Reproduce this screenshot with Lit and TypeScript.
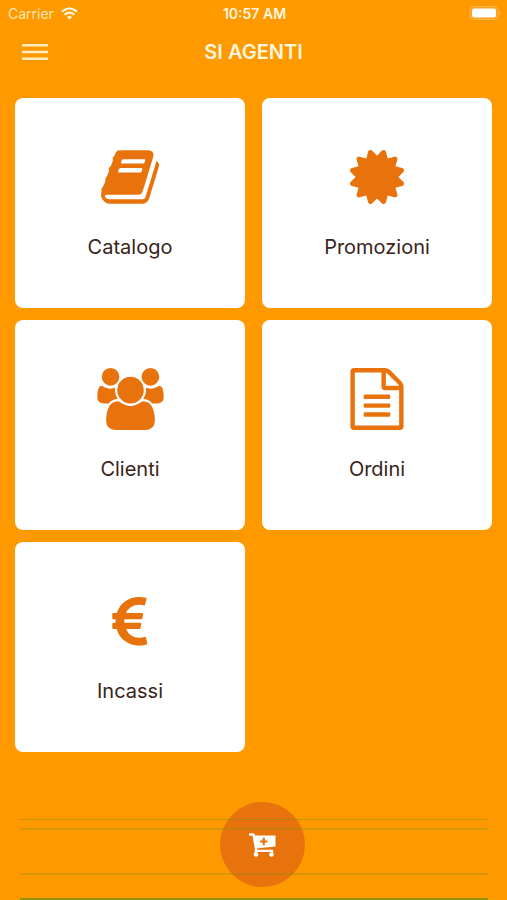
import { LitElement, html, css, svg } from "lit";
import { customElement } from "lit/decorators.js";

const book = svg`<svg viewBox="64 128 1664 1536" width="58" height="54" aria-hidden="true"><path d="M1703 478q40 57 18 129l-275 906q-19 64-76.5 107.5t-122.5 43.5h-923q-77 0-148.5-53.5t-99.5-131.5q-24-67-2-127 0-4 3-27t4-37q1-8-3-21.5t-3-19.5q2-11 8-21t16.5-23.5 16.5-23.5q23-38 45-91.5t30-91.5q3-10 .5-30t-.5-28q3-11 17-28t17-23q21-36 42-92t25-90q1-9-2.5-32t.5-28q4-13 22-30.5t22-22.5q19-26 42.5-84.5t27.5-96.5q1-8-3-25.5t-2-26.5q2-8 9-18t18-23 17-21q8-12 16.5-30.5t15-35 16-36 19.5-32 26.5-23.5 36-11.5 47.5 5.5l-1 3q38-9 51-9h761q74 0 114 56t18 130l-274 906q-36 119-71.5 153.5t-128.5 34.5h-869q-27 0-38 15-11 16-1 43 24 70 144 70h923q29 0 56-15.5t35-41.5l300-987q7-22 5-57 38 15 59 43zm-1064 2q-4 13 2 22.5t20 9.5h608q13 0 25.5-9.5t16.5-22.5l21-64q4-13-2-22.5t-20-9.5h-608q-13 0-25.5 9.5t-16.5 22.5zm-83 256q-4 13 2 22.5t20 9.5h608q13 0 25.5-9.5t16.5-22.5l21-64q4-13-2-22.5t-20-9.5h-608q-13 0-25.5 9.5t-16.5 22.5z"/></svg>`;

const badge = svg`<svg viewBox="128 128 1536 1536" width="54" height="54" aria-hidden="true"><path d="M1504 896l138 135q30 28 20 70-12 41-52 51l-188 48 53 186q12 41-19 70-29 31-70 19l-186-53-48 188q-10 40-51 52-12 2-19 2-31 0-51-22l-135-138-135 138q-28 30-70 20-41-11-51-52l-48-188-186 53q-41 12-70-19-31-29-19-70l53-186-188-48q-40-10-52-51-10-42 20-70l138-135-138-135q-30-28-20-70 12-41 52-51l188-48-53-186q-12-41 19-70 29-31 70-19l186 53 48-188q10-41 51-51 41-12 70 19l135 139 135-139q29-30 70-19 41 10 51 51l48 188 186-53q41-12 70 19 31 29 19 70l-53 186 188 48q40 10 52 51 10 42-20 70z"/></svg>`;

const users = svg`<svg viewBox="0 0 1920 1792" width="67" height="62" aria-hidden="true"><path d="M593 896q-162 5-265 128h-134q-82 0-138-40.5t-56-118.5q0-353 124-353 6 0 43.5 21t97.5 42.5 119 21.5q67 0 133-23-5 37-5 66 0 139 81 256zm1071 637q0 120-73 189.5t-194 69.5h-874q-121 0-194-69.5t-73-189.5q0-53 3.5-103.5t14-109 26.5-108.5 43-97.5 62-81 85.5-53.5 111.5-20q10 0 43 21.5t73 48 107 48 135 21.5 135-21.5 107-48 73-48 43-21.5q61 0 111.5 20t85.5 53.5 62 81 43 97.5 26.5 108.5 14 109 3.5 103.5zm-1024-1277q0 106-75 181t-181 75-181-75-75-181 75-181 181-75 181 75 75 181zm704 384q0 159-112.5 271.5t-271.5 112.5-271.5-112.5-112.5-271.5 112.5-271.5 271.5-112.5 271.5 112.5 112.5 271.5zm576 225q0 78-56 118.5t-138 40.5h-134q-103-123-265-128 81-117 81-256 0-29-5-66 66 23 133 23 59 0 119-21.5t97.5-42.5 43.5-21q124 0 124 353zm-128-609q0 106-75 181t-181 75-181-75-75-181 75-181 181-75 181 75 75 181z"/></svg>`;

const sheet = svg`<svg viewBox="128 0 1536 1792" width="54" height="62" aria-hidden="true"><path d="M1596 380q28 28 48 76t20 88v1152q0 40-28 68t-68 28h-1344q-40 0-68-28t-28-68v-1600q0-40 28-68t68-28h896q40 0 88 20t76 48zm-444-244v376h376q-10-29-22-41l-313-313q-12-12-41-22zm384 1528v-1024h-416q-40 0-68-28t-28-68v-416h-768v1536h1280z"/><rect x="512" y="768" width="768" height="128" rx="32"/><rect x="512" y="1024" width="768" height="128" rx="32"/><rect x="512" y="1280" width="768" height="128" rx="32"/></svg>`;

const euro = svg`<svg viewBox="384 128 1024 1792" width="36" height="62" aria-hidden="true"><path d="M1360 1507l35 159q3 12-3 22.5t-17 14.5l-5 1q-4 2-10.5 3.5t-16 4.5-21.5 5.5-25.5 5-30 5-33.5 4.5-36.5 3-38.5 1q-234 0-409-130.5t-238-351.5h-95q-13 0-22.5-9.5t-9.5-22.5v-113q0-13 9.5-22.5t22.5-9.5h66q-2-57 1-105h-67q-14 0-23-9t-9-23v-114q0-14 9-23t23-9h98q67-210 243.5-338t400.5-128q102 0 194 23 11 3 20 15 6 11 3 24l-43 159q-3 13-14 19.5t-24 2.5l-4-1q-4-1-11.5-2.5l-17.5-3.5-22.5-3.5-26-3-29-2.5-29.5-1q-126 0-226 64t-150 176h468q16 0 25 12 10 12 7 26l-24 114q-5 26-32 26h-488q-3 37 0 105h459q15 0 25 12 9 12 6 27l-24 112q-2 11-11 18.5t-20 7.5h-387q48 117 149.5 185.5t228.5 68.5q18 0 36-1.5t33.5-3.5 29.5-4.5 24.5-5 18.5-4.5l12-3 5-2q13-5 26 2 12 7 15 21z"/></svg>`;

const tiles = [
  { label: "Catalogo", icon: book },
  { label: "Promozioni", icon: badge },
  { label: "Clienti", icon: users },
  { label: "Ordini", icon: sheet },
  { label: "Incassi", icon: euro },
];

@customElement("app-root")
export class AppRoot extends LitElement {
  static styles = css`
    :host {
      display: flex;
      flex-direction: column;
      min-height: 100vh;
      box-sizing: border-box;
      background: #ff9900;
      color: #fff6dc;
      font-family: Inter, "Liberation Sans", sans-serif;
    }
    button {
      border: 0;
      padding: 0;
      margin: 0;
      font: inherit;
      color: inherit;
      background: none;
      cursor: pointer;
    }
    svg { display: block; }
    .status {
      display: grid;
      grid-template-columns: 1fr auto 1fr;
      align-items: center;
      height: 26px;
      padding: 0 6px 0 8px;
      font-size: 14px;
    }
    .carrier { display: flex; align-items: center; gap: 7px; color: #ffe6b0; }
    .clock { font-weight: 600; }
    .battery { justify-self: end; }
    .bar {
      display: grid;
      grid-template-columns: 1fr auto 1fr;
      align-items: center;
      height: 52px;
      padding: 0 22px;
    }
    .menu { justify-self: start; }
    h1 { margin: 0; font-size: 20px; line-height: 24px; font-weight: 600; }
    .tiles {
      display: grid;
      grid-template-columns: 1fr 1fr;
      grid-auto-rows: 210px;
      gap: 12px 17px;
      padding: 20px 15px 0;
    }
    .tile {
      display: flex;
      flex-direction: column;
      align-items: center;
      padding-top: 48px;
      border-radius: 8px;
      background: #fff;
      color: #37241a;
      font-size: 20px;
      line-height: 24px;
    }
    .icon {
      display: flex;
      align-items: center;
      height: 62px;
      margin-bottom: 27px;
      fill: #e8730c;
    }
    .footer {
      display: grid;
      justify-items: center;
      height: 98px;
      margin-top: auto;
      padding: 0 19px 0 20px;
    }
    .cart {
      grid-area: 1 / 1;
      display: grid;
      place-items: center;
      width: 85px;
      height: 85px;
      margin-left: 16px;
      border-radius: 50%;
      background: #e8730c;
    }
    .rules {
      grid-area: 1 / 1;
      justify-self: stretch;
      display: grid;
      grid-template-rows: 9px 45px 25px 2px;
      padding-top: 17px;
      pointer-events: none;
    }
    .rule { border-top: 1px solid rgba(120, 145, 20, 0.45); }
    .soft { border-top: 2px solid rgba(120, 145, 20, 0.3); }
    .last { border-top: 2px solid rgba(120, 145, 20, 0.8); }
  `;

  render() {
    return html`
      <div class="status">
        <span class="carrier">Carrier
          <svg width="17" height="13" viewBox="0 0 17 13" fill="none" stroke="#fff6dc" stroke-width="2.3" aria-hidden="true">
            <path d="M1 4.7Q8.5-2 16 4.7M3.700 7.700Q8.5 3.5 13.300 7.700"/>
            <path d="M5.900 9.900Q8.5 7.900 11.100 9.900L8.5 12.600Z" fill="#fff6dc" stroke="none"/>
          </svg>
        </span>
        <span class="clock">10:57 AM</span>
        <svg class="battery" width="32" height="14" viewBox="0 0 32 14" aria-hidden="true">
          <rect x="1" y=".5" width="28" height="13" rx="4" fill="#ffa01a" stroke="#ffb84d"/>
          <rect x="3" y="2.5" width="24" height="9" rx="2" fill="#fff"/>
          <path d="M30.5 5q2 2 0 4z" fill="#ffbf60"/>
        </svg>
      </div>
      <header class="bar">
        <button class="menu" aria-label="Menu">
          <svg width="26" height="16" viewBox="0 0 26 16" fill="#ffecc0">
            <path d="M0 0h26v2.600H0zM0 6.700h26v2.600H0zM0 13.400h26v2.600H0z"/>
          </svg>
        </button>
        <h1>SI AGENTI</h1>
      </header>
      <main class="tiles">
        ${tiles.map((t) => html`<button class="tile"><span class="icon">${t.icon}</span>${t.label}</button>`)}
      </main>
      <footer class="footer">
        <button class="cart" aria-label="Carrello">
          <svg width="28" height="24" viewBox="0 0 28 24" fill="#fff">
            <path d="M2 1.500H5.500L8 15.500V21" fill="none" stroke="#fff" stroke-width="2.400" stroke-linecap="round" stroke-linejoin="round"/>
            <path d="M6 2.500H27.500V13.500L7.500 15.500Z"/>
            <path d="M7 17.800H24V20" fill="none" stroke="#fff" stroke-width="2.200"/>
            <circle cx="8" cy="21.500" r="2.300"/><circle cx="23.500" cy="21.500" r="2.300"/>
            <path d="M12 8.500H19.500M15.750 4.800V12.200" stroke="#e8730c" stroke-width="2.200"/>
          </svg>
        </button>
        <div class="rules">
          <div class="rule"></div>
          <div class="soft"></div>
          <div class="soft"></div>
          <div class="last"></div>
        </div>
      </footer>
    `;
  }
}
